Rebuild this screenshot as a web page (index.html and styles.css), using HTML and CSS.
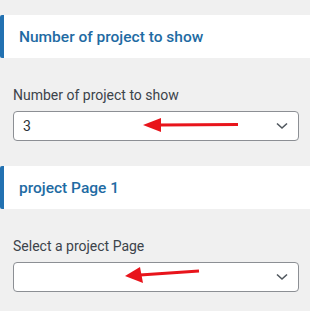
FILE: index.html
```html
<!DOCTYPE html>
<html>
<head>
<meta charset="utf-8">
<link rel="stylesheet" href="styles.css">
</head>
<body>
<div class="panel">
  <div class="section-head">Number of project to show</div>
  <div class="field">
    <label class="field-label">Number of project to show</label>
    <div class="select">
      <span class="value">3</span>
      <svg class="chev" width="12" height="8" viewBox="0 0 12 8"><path d="M1 1.5 L6 6 L11 1.5" fill="none" stroke="#50575e" stroke-width="1.6"/></svg>
      <svg class="arrow a1" width="110" height="20" viewBox="0 0 110 20">
        <line x1="17" y1="10" x2="95" y2="9.5" stroke="#e8141b" stroke-width="3"/>
        <polygon points="0,10 18,3 18,17" fill="#e8141b"/>
      </svg>
    </div>
  </div>
  <div class="section-head">project Page 1</div>
  <div class="field">
    <label class="field-label">Select a project Page</label>
    <div class="select">
      <span class="value"></span>
      <svg class="chev" width="12" height="8" viewBox="0 0 12 8"><path d="M1 1.5 L6 6 L11 1.5" fill="none" stroke="#50575e" stroke-width="1.6"/></svg>
      <svg class="arrow a2" width="90" height="22" viewBox="0 0 90 22">
        <line x1="15" y1="11" x2="74" y2="7" stroke="#e8141b" stroke-width="3"/>
        <polygon points="0,12 15,3 18,19" fill="#e8141b"/>
      </svg>
    </div>
  </div>
</div>
</body>
</html>
```
FILE: styles.css
```css
html, body {
  margin: 0;
  padding: 0;
  background: #f0f0f0;
  font-family: Roboto, "Noto Sans", sans-serif;
}
.panel {
  display: flex;
  flex-direction: column;
  padding-top: 15px;
}
.section-head {
  background: #fff;
  border-left: 4px solid #2271b1;
  border-radius: 2px 0 0 2px;
  height: 43px;
  box-sizing: border-box;
  padding-left: 15px;
  display: flex;
  align-items: center;
  color: #1e6ba3;
  font-size: 15.5px;
  font-weight: 500;
}
.field {
  padding: 27px 11px 25px 13px;
  display: flex;
  flex-direction: column;
}
.field-label {
  color: #3c434a;
  font-size: 14px;
  line-height: 20px;
  margin-bottom: 6px;
}
.select {
  position: relative;
  height: 30px;
  box-sizing: border-box;
  background: #fff;
  border: 1px solid #8c8f94;
  border-radius: 4px;
  display: flex;
  align-items: center;
  padding: 0 8px 0 9px;
  color: #2c3338;
  font-size: 14px;
}
.value {
  flex: 1;
}
.chev {
  margin-right: 2px;
}
.arrow {
  position: absolute;
}
.a1 {
  left: 129px;
  top: 3px;
}
.a2 {
  left: 111px;
  top: 1px;
}
```
